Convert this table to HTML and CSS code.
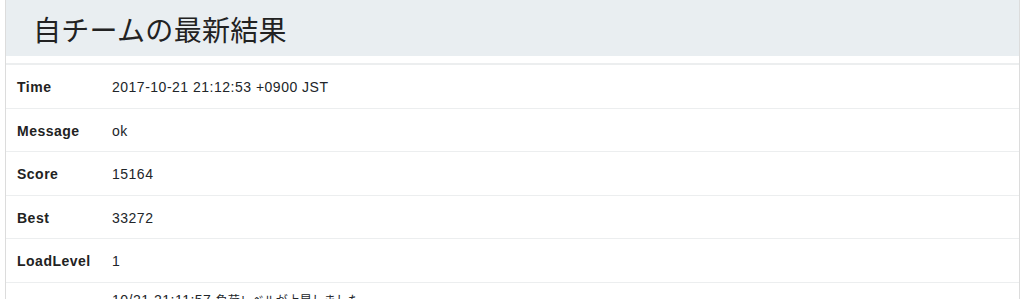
FILE: index.html
```html
<!DOCTYPE html>
<html lang="ja">
<head>
<meta charset="utf-8">
<title>自チームの最新結果</title>
<link rel="stylesheet" href="styles.css">
</head>
<body>
<div class="panel">
  <div class="panel-heading"><h1 class="title">自チームの最新結果</h1></div>
  <table class="result">
    <thead><tr><th></th><th></th></tr></thead>
    <tbody>
      <tr><th>Time</th><td>2017-10-21 21:12:53 +0900 JST</td></tr>
      <tr><th>Message</th><td>ok</td></tr>
      <tr><th>Score</th><td>15164</td></tr>
      <tr><th>Best</th><td>33272</td></tr>
      <tr><th>LoadLevel</th><td>1</td></tr>
      <tr class="log"><th>Log</th><td>10/21 21:11:57 <span class="ja">負荷レベルが上昇しました</span><br>10/21 21:12:07 <span class="ja">負荷レベルが上昇しました</span></td></tr>
    </tbody>
  </table>
</div>
</body>
</html>
```
FILE: styles.css
```css
html, body {
  margin: 0;
  padding: 0;
  background: #fff;
}
body {
  font-family: "Liberation Sans", Arial, "Noto Sans CJK JP", sans-serif;
  color: #212529;
  font-size: 14px;
  letter-spacing: 0.5px;
}
.panel {
  margin: 0 4px 0 5px;
  border-left: 1px solid #dcdcdc;
  border-right: 1px solid #dcdcdc;
}
.panel-heading {
  background: #e9eef1;
  height: 56px;
  display: flex;
  align-items: center;
  padding-left: 27px;
}
.title {
  margin: 0;
  font-family: "Noto Sans CJK JP", sans-serif;
  font-weight: 400;
  font-size: 28px;
  line-height: 1;
  letter-spacing: 0.3px;
  color: #222;
  position: relative;
  top: 1px;
}
.result {
  width: 100%;
  border-collapse: collapse;
  margin-top: 7px;
}
.result thead th {
  padding: 0;
  height: 0;
  border-bottom: 2px solid #eceeef;
}
.result tbody th,
.result tbody td {
  border-top: 1px solid #eceeef;
  padding: 13px 0 11px 11px;
  line-height: 18.6px;
  text-align: left;
  vertical-align: middle;
}
.result tbody th {
  width: 85px;
  font-weight: bold;
  color: #222;
}
.result tbody td {
  padding-left: 10px;
}
.result tbody .log th,
.result tbody .log td {
  padding-top: 8px;
}
.ja {
  font-family: "Noto Sans CJK JP", sans-serif;
  font-size: 12px;
  letter-spacing: 0;
}
```
